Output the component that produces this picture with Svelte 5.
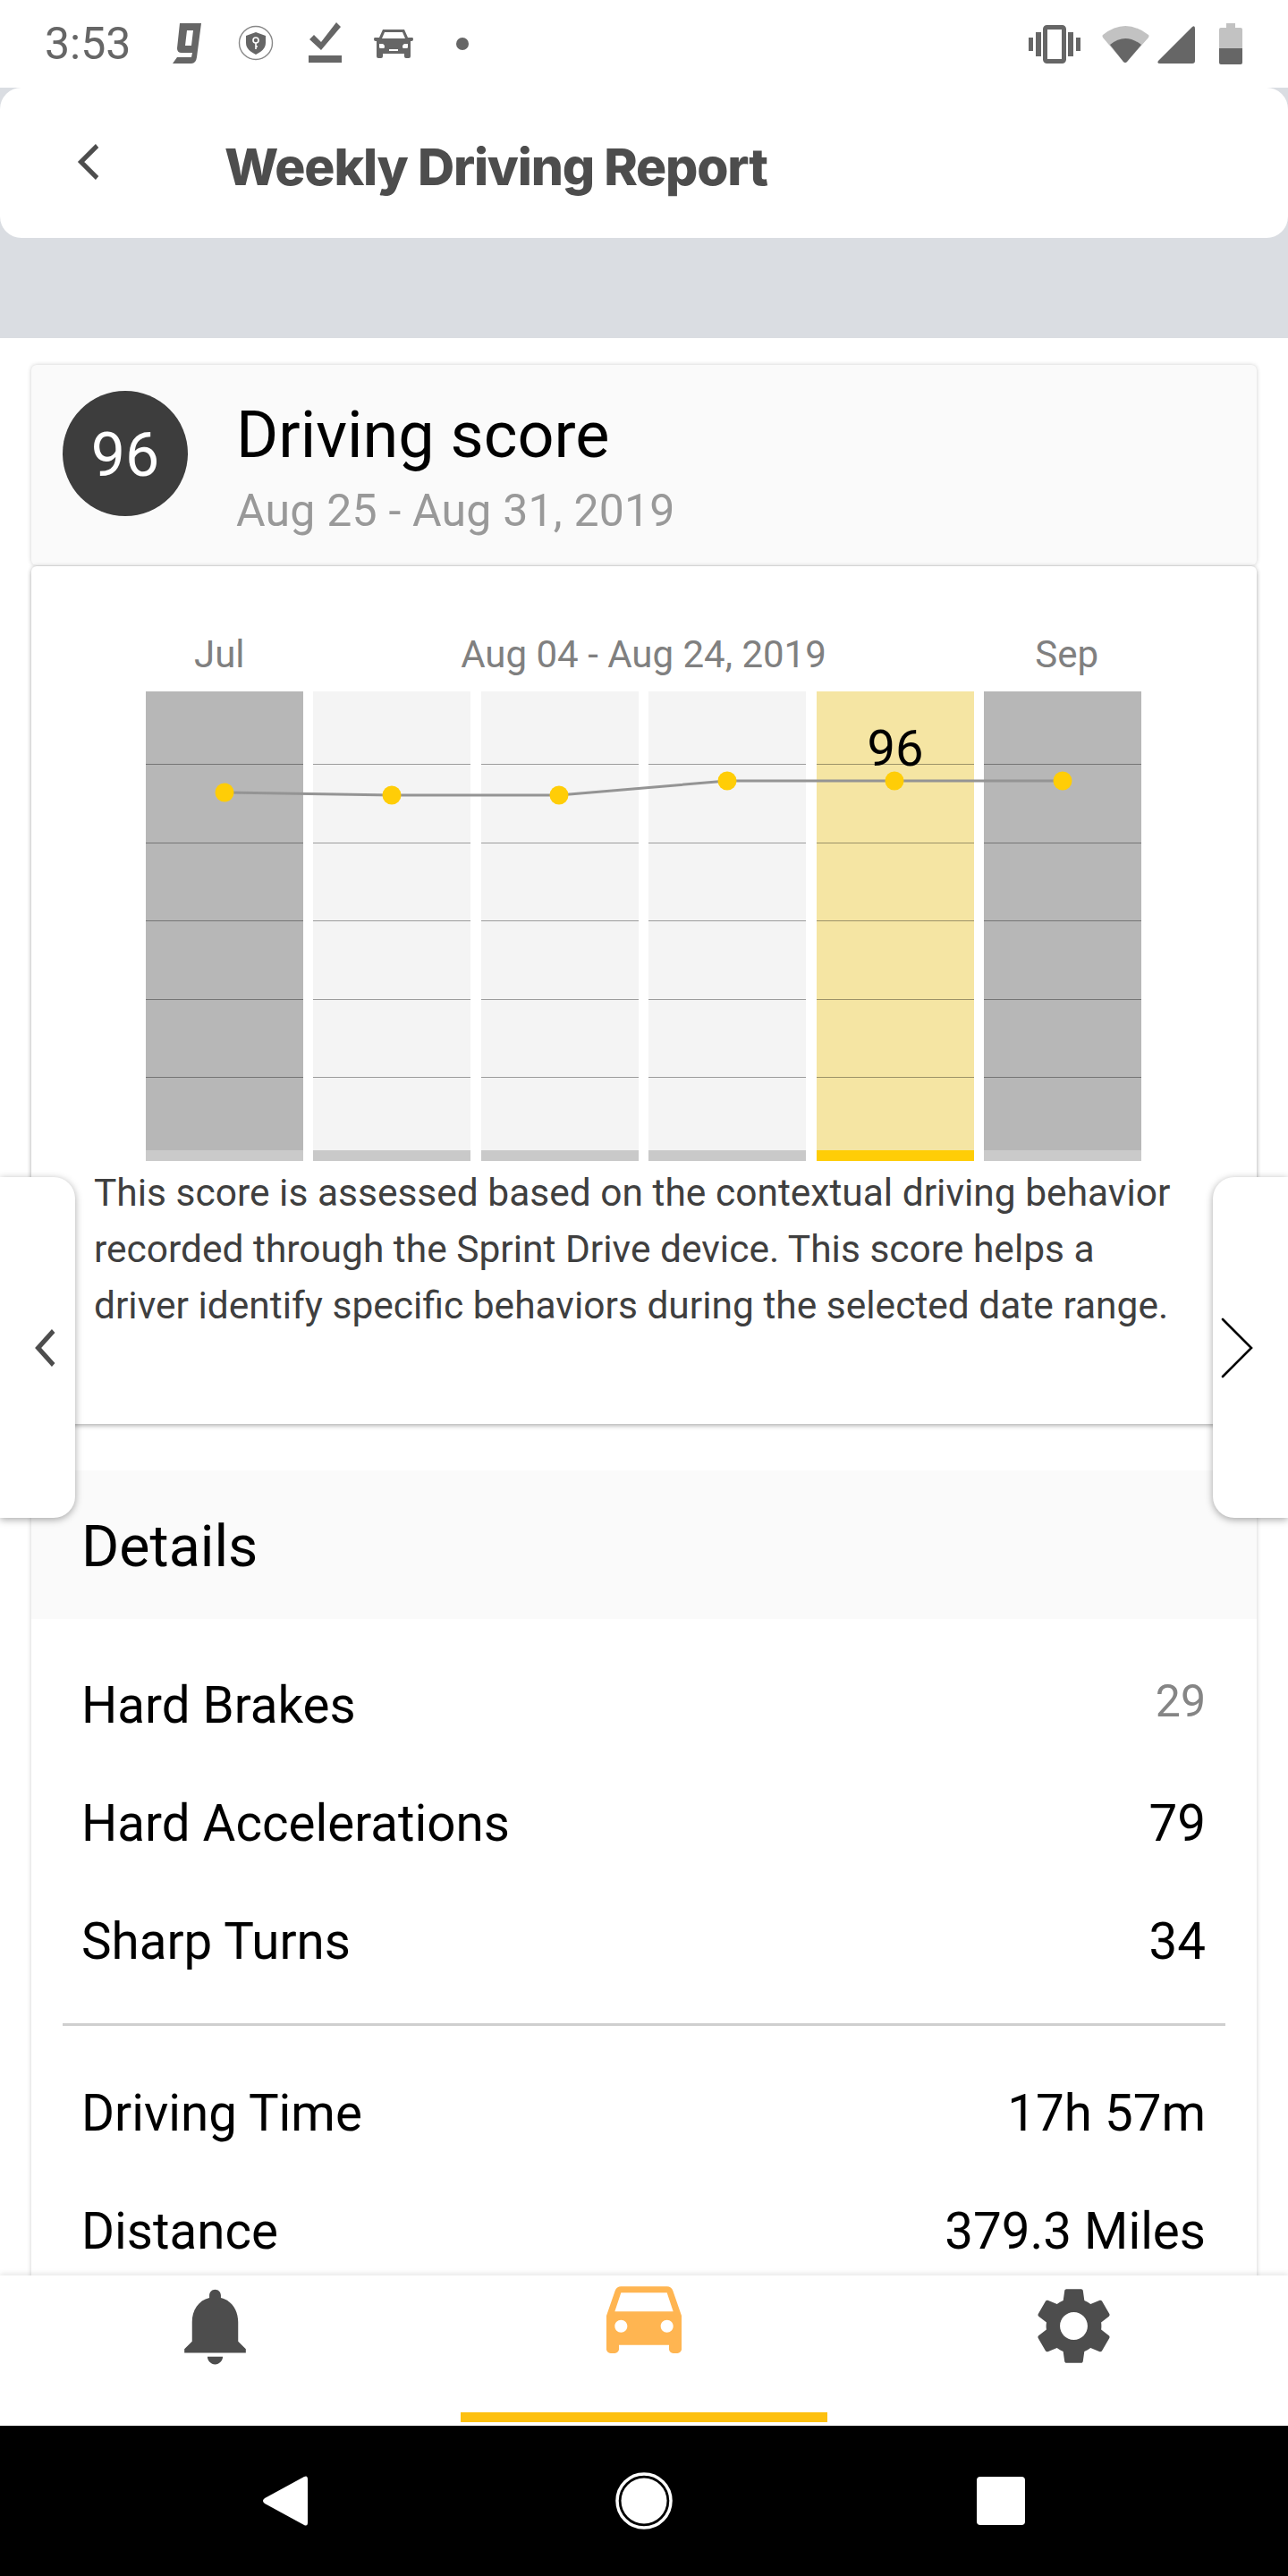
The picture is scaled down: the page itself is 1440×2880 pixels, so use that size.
<script>
  const bars = ["past", "week", "week", "week", "current", "past"];
  const gridlines = [0, 1, 2, 3, 4];
  const points = [
    [88, 113],
    [275, 116],
    [462, 116],
    [650, 100],
    [837, 100],
    [1025, 100],
  ];
  const line = points.map((p) => p.join(",")).join(" ");

  const events = [
    { label: "Hard Brakes", value: "29", muted: true },
    { label: "Hard Accelerations", value: "79" },
    { label: "Sharp Turns", value: "34" },
  ];
  const totals = [
    { label: "Driving Time", value: "17h 57m" },
    { label: "Distance", value: "379.3 Miles" },
  ];
</script>

<div class="phone">
  <div class="status">
    <span class="time">3:53</span>
    <svg class="st-g" viewBox="0 0 32 45" width="32" height="45">
      <path d="M8 0h24l-5 38q-1 7-6 7H0l5-7h16l1-5H10q-5 0-5-5zm8 8l-2 17h7l2-17z" fill="#666" fill-rule="evenodd" />
    </svg>
    <svg class="st-shield" viewBox="0 0 40 40" width="40" height="40">
      <circle cx="20" cy="20" r="18.5" fill="none" stroke="#888" stroke-width="1.4" />
      <path d="M20 8l11 4v8c0 6-5 10-11 13-6-3-11-7-11-13v-8z" fill="#666" />
      <circle cx="20" cy="17" r="3" fill="none" stroke="#fff" stroke-width="1.6" />
      <path d="M20 20v7M20 24h2" stroke="#fff" stroke-width="1.6" fill="none" />
    </svg>
    <svg class="st-check" viewBox="0 0 37 45" width="37" height="45">
      <path d="M1 19l5-5 8 8L31 0l5 5-22 26z" fill="#666" />
      <rect x="0" y="37" width="37" height="8" fill="#666" />
    </svg>
    <svg class="st-car" viewBox="0 0 44 32" width="44" height="32">
      <path d="M10 0h24l4 9h5q1 0 1 2t-2 2h-1v17q0 2-2 2h-3q-2 0-2-2v-3H10v3q0 2-2 2H5q-2 0-2-2V13H2q-2 0-2-2t1-2h5zm2 3l-3 7h26l-3-7zM6 16v4q0 1 2 1h3q1 0 1-2t-2-3zm32 0h-4q-2 1-2 3t1 2h3q2 0 2-1zm-21 6v2h10v-2z" fill="#666" fill-rule="evenodd" />
    </svg>
    <span class="st-dot"></span>

    <div class="status-right">
      <svg viewBox="0 0 58 43" width="58" height="43">
        <path d="M0 14h5v15H0zM8 8h6v27H8zM44 8h6v27h-6zM53 14h5v15h-5z" fill="#666" />
        <rect x="18.5" y="2.5" width="21" height="38" rx="2" fill="none" stroke="#666" stroke-width="5" />
      </svg>
      <svg class="st-wifi" viewBox="0 0 53 43" width="53" height="43">
        <path d="M1 11Q26-9 52 11q1 1 0 3L28 41q-2 2-4 0L1 14q-1-2 0-3z" fill="#c2c2c2" />
        <path d="M9 22Q26 8 44 22L28 41q-2 2-4 0z" fill="#666" />
      </svg>
      <svg class="st-signal" viewBox="0 0 42 42" width="42" height="42">
        <path d="M39 1q3-2 3 2v36q0 3-3 3H3q-4 0-2-3z" fill="#666" />
      </svg>
      <svg class="st-battery" viewBox="0 0 26 46" width="26" height="46">
        <path d="M8 0h10v5h6q2 0 2 2v21H0V7q0-2 2-2h6z" fill="#c2c2c2" />
        <path d="M0 28h26v16q0 2-2 2H2q-2 0-2-2z" fill="#666" />
      </svg>
    </div>
  </div>

  <div class="top">
    <header>
      <svg class="back" viewBox="0 0 26 40" width="26" height="40">
        <path d="M24 2L4 20l20 18" fill="none" stroke="#4d4d4d" stroke-width="5.5" transform="matrix(.9 0 0 1 1 0)" />
      </svg>
      <h1>Weekly Driving Report</h1>
    </header>
  </div>

  <main>
    <section class="score-head">
      <div class="badge">96</div>
      <div class="score-text">
        <h2>Driving score</h2>
        <p class="range">Aug 25 - Aug 31, 2019</p>
      </div>
    </section>

    <section class="chart-card">
      <div class="labels">
        <span class="jul">Jul</span>
        <span>Aug 04 - Aug 24, 2019</span>
        <span class="sep">Sep</span>
      </div>
      <div class="chart">
        {#each bars as kind}
          <div class="bar {kind}">
            <div class="grid">
              {#each gridlines as g}
                <i></i>
              {/each}
            </div>
          </div>
        {/each}
        <svg class="plot" viewBox="0 0 1113 525" width="1113" height="525">
          <polyline points={line} fill="none" stroke="#949494" stroke-width="3" />
          {#each points as p}
            <circle cx={p[0]} cy={p[1]} r="10.5" fill="#ffcd07" />
          {/each}
        </svg>
        <span class="bar-value">96</span>
      </div>
      <p class="desc">
        This score is assessed based on the contextual driving behavior<br />
        recorded through the Sprint Drive device. This score helps a<br />
        driver identify specific behaviors during the selected date range.
      </p>
    </section>

    <section class="details">
      <h3>Details</h3>
      <div class="rows events">
        {#each events as row}
          <div class="row">
            <span>{row.label}</span>
            <span class:muted={row.muted}>{row.value}</span>
          </div>
        {/each}
      </div>
      <hr />
      <div class="rows">
        {#each totals as row}
          <div class="row">
            <span>{row.label}</span>
            <span>{row.value}</span>
          </div>
        {/each}
      </div>
    </section>
  </main>

  <button class="tab left" aria-label="Previous">
    <svg viewBox="0 0 26 42" width="26" height="42">
      <path d="M23 2L4 21l19 19" fill="none" stroke="#4d4d4d" stroke-width="5.5" transform="matrix(.9 0 0 1 1 0)" />
    </svg>
  </button>
  <button class="tab right" aria-label="Next">
    <svg viewBox="0 0 36 68" width="36" height="68">
      <path d="M2 2l32 32L2 66" fill="none" stroke="#000" stroke-width="2.6" stroke-linecap="round" />
    </svg>
  </button>

  <nav class="tabs">
    <div class="tab-item">
      <svg viewBox="0 0 24 24" width="103" height="103">
        <path fill="#4d4d4d" d="M12 22c1.1 0 2-.9 2-2h-4c0 1.1.89 2 2 2zm6-6v-5c0-3.07-1.64-5.64-4.5-6.32V4c0-.83-.67-1.5-1.5-1.5s-1.5.67-1.5 1.5v.68C7.63 5.36 6 7.92 6 11v5l-2 2v1h16v-1l-2-2z" />
      </svg>
    </div>
    <div class="tab-item active">
      <svg viewBox="0 0 24 24" width="112" height="112">
        <path fill="#ffb551" d="M18.92 6.01C18.72 5.42 18.16 5 17.5 5h-11c-.66 0-1.21.42-1.42 1.01L3 12v8c0 .55.45 1 1 1h1c.55 0 1-.45 1-1v-1h12v1c0 .55.45 1 1 1h1c.55 0 1-.45 1-1v-8l-2.08-5.99zM6.5 16c-.83 0-1.5-.67-1.5-1.5S5.67 13 6.5 13s1.5.67 1.5 1.5S7.33 16 6.5 16zm11 0c-.83 0-1.5-.67-1.5-1.5s.67-1.5 1.5-1.5 1.5.67 1.5 1.5-.67 1.5-1.5 1.5zM5 11l1.5-4.5h11L19 11H5z" />
      </svg>
    </div>
    <div class="tab-item">
      <svg viewBox="0 0 24 24" width="103" height="103">
        <path fill="#4d4d4d" d="M19.14 12.94c.04-.3.06-.61.06-.94 0-.32-.02-.64-.07-.94l2.03-1.58c.18-.14.23-.41.12-.61l-1.92-3.32c-.12-.22-.37-.29-.59-.22l-2.39.96c-.5-.38-1.03-.7-1.62-.94l-.36-2.54c-.04-.24-.24-.41-.48-.41h-3.84c-.24 0-.43.17-.47.41l-.36 2.54c-.59.24-1.13.57-1.62.94l-2.39-.96c-.22-.08-.47 0-.59.22L2.74 8.87c-.12.21-.08.47.12.61l2.03 1.58c-.05.3-.09.63-.09.94s.02.64.07.94l-2.03 1.58c-.18.14-.23.41-.12.61l1.92 3.32c.12.22.37.29.59.22l2.39-.96c.5.38 1.03.7 1.62.94l.36 2.54c.05.24.24.41.48.41h3.84c.24 0 .44-.17.47-.41l.36-2.54c.59-.24 1.13-.56 1.62-.94l2.39.96c.22.08.47 0 .59-.22l1.92-3.32c.12-.22.07-.47-.12-.61l-2.01-1.58zM12 15.6c-1.98 0-3.6-1.62-3.6-3.6s1.62-3.6 3.6-3.6 3.6 1.62 3.6 3.6-1.62 3.6-3.6 3.6z" />
      </svg>
    </div>
  </nav>

  <div class="softkeys">
    <svg viewBox="0 0 50 56" width="50" height="56">
      <path d="M46 1q4-2 4 3v48q0 5-4 3L2 31q-4-3 0-6z" fill="#fff" />
    </svg>
    <svg viewBox="0 0 64 64" width="64" height="64">
      <circle cx="32" cy="32" r="30" fill="none" stroke="#fff" stroke-width="3.5" />
      <circle cx="32" cy="32" r="25.5" fill="#fff" />
    </svg>
    <svg class="square" viewBox="0 0 54 54" width="54" height="54">
      <rect width="54" height="54" rx="4" fill="#fff" />
    </svg>
  </div>
</div>

<style>
  :global(body) {
    background: #fff;
  }

  .phone {
    position: relative;
    width: 1440px;
    height: 2880px;
    display: flex;
    flex-direction: column;
    overflow: hidden;
    font-family: Roboto, "Liberation Sans", sans-serif;
    color: #000;
  }

  .status {
    height: 98px;
    flex: none;
    display: flex;
    align-items: center;
    padding: 0 51px 0 50px;
    box-sizing: border-box;
    color: #666;
  }

  .time {
    font-size: 50px;
    width: 143px;
    line-height: 1;
  }

  .st-g {
    margin-top: -2px;
  }

  .st-shield {
    margin-left: 41px;
    margin-top: -2px;
  }

  .st-check {
    margin-left: 39px;
    margin-top: -3px;
  }

  .st-car {
    margin-left: 36px;
  }

  .st-dot {
    width: 14px;
    height: 14px;
    border-radius: 50%;
    background: #666;
    margin-left: 48px;
  }

  .status-right {
    margin-left: auto;
    display: flex;
    align-items: center;
  }

  .st-wifi {
    margin-left: 24px;
  }

  .st-signal {
    margin-left: 9px;
    margin-top: 2px;
  }

  .st-battery {
    margin-left: 27px;
  }

  .top {
    height: 280px;
    flex: none;
    background: #dadde2;
  }

  header {
    height: 168px;
    background: #fff;
    border-radius: 24px;
    display: flex;
    align-items: center;
    padding-left: 86px;
  }

  .back {
    margin-top: -2px;
  }

  h1 {
    margin: 8px 0 0 139px;
    font-family: Inter, sans-serif;
    font-weight: 800;
    font-size: 57px;
    letter-spacing: -1.2px;
    color: #4d4d4d;
  }

  main {
    flex: 1;
    min-height: 0;
    overflow: hidden;
    padding: 30px 35px 0;
  }

  section {
    box-shadow: 0 0 5px rgba(0, 0, 0, 0.2);
  }

  .score-head {
    height: 224px;
    box-sizing: border-box;
    background: #fafafa;
    border-radius: 6px;
    display: flex;
    padding: 29px 0 0 35px;
    gap: 54px;
    margin-bottom: 1px;
  }

  .badge {
    width: 140px;
    height: 140px;
    border-radius: 50%;
    background: #3d3d3d;
    color: #fff;
    font-size: 68px;
    display: flex;
    align-items: center;
    justify-content: center;
    box-sizing: border-box;
    padding-top: 4px;
  }

  .score-text {
    margin-top: 8px;
  }

  h2 {
    margin: 0;
    font-size: 72px;
    font-weight: 400;
    line-height: 84px;
  }

  .range {
    margin: 12px 0 0;
    font-size: 50px;
    line-height: 60px;
    letter-spacing: 0.2px;
    color: #999;
  }

  .chart-card {
    position: relative;
    z-index: 1;
    height: 959px;
    box-sizing: border-box;
    background: #fff;
    border-radius: 6px;
    padding: 70px 0 0;
    box-shadow:
      0 0 5px rgba(0, 0, 0, 0.2),
      0 3px 5px rgba(0, 0, 0, 0.18);
  }

  .labels {
    margin-left: 128px;
    width: 1113px;
    display: grid;
    grid-template-columns: 1fr auto 1fr;
    font-size: 42px;
    line-height: 58px;
    color: #808080;
  }

  .jul {
    padding-left: 54px;
  }

  .sep {
    justify-self: end;
    padding-right: 48px;
  }

  .chart {
    position: relative;
    margin: 12px 0 0 128px;
    width: 1113px;
    height: 525px;
    display: flex;
    justify-content: space-between;
  }

  .bar {
    width: 176px;
    height: 100%;
    box-sizing: border-box;
    border-bottom: 12px solid #c9c9c9;
    background: #f4f4f4;
  }

  .bar.past {
    background: #b7b7b7;
    border-bottom-color: #cacaca;
  }

  .bar.current {
    background: #f5e5a3;
    border-bottom-color: #ffcd07;
  }

  .grid {
    padding-top: 81px;
    display: flex;
    flex-direction: column;
    gap: 86.6px;
  }

  .grid i {
    display: block;
    height: 1px;
    background: rgba(0, 0, 0, 0.36);
  }

  .plot {
    position: absolute;
    left: 0;
    top: 0;
  }

  .bar-value {
    position: absolute;
    left: 750px;
    width: 176px;
    top: 29px;
    text-align: center;
    font-size: 56px;
    line-height: 70px;
  }

  .desc {
    margin: 0 0 0 70px;
    padding-top: 4px;
    font-size: 42.5px;
    line-height: 63px;
    color: #3f3f3f;
    white-space: nowrap;
  }

  .details {
    background: #fff;
    padding: 52px 0 60px;
  }

  h3 {
    margin: 0;
    height: 166px;
    background: #fafafa;
    display: flex;
    align-items: center;
    padding: 4px 0 0 56px;
    box-sizing: border-box;
    font-size: 64.5px;
    font-weight: 400;
  }

  .rows {
    padding: 32px 57px 0 56px;
    display: flex;
    flex-direction: column;
  }

  .rows.events {
    padding-top: 31px;
    padding-bottom: 25px;
  }

  .row {
    height: 132px;
    display: flex;
    align-items: center;
    justify-content: space-between;
    font-size: 56.5px;
  }

  .muted {
    font-size: 50px;
    color: #858585;
    margin-top: -10px;
  }

  hr {
    margin: 0 35px;
    border: 0;
    height: 3px;
    background: #cfcfcf;
  }

  .tab {
    position: absolute;
    top: 1316px;
    width: 84px;
    height: 381px;
    padding: 0;
    border: 0;
    background: #fff;
    box-shadow: 0 2px 8px rgba(0, 0, 0, 0.35);
    display: flex;
    align-items: center;
    z-index: 2;
  }

  .tab.left {
    left: 0;
    border-radius: 0 24px 24px 0;
    padding-left: 38px;
  }

  .tab.right {
    right: 0;
    border-radius: 24px 0 0 24px;
    padding-left: 9px;
  }

  .tabs {
    flex: none;
    height: 168px;
    background: #fff;
    display: grid;
    grid-template-columns: repeat(3, 1fr);
    position: relative;
    box-shadow: 0 -2px 6px rgba(0, 0, 0, 0.1);
  }

  .tab-item {
    position: relative;
    display: flex;
    justify-content: center;
    padding-top: 5px;
  }

  .tab-item.active {
    padding-top: 0;
  }

  .tab-item.active svg {
    margin-top: -11px;
  }

  .tab-item.active::after {
    content: "";
    position: absolute;
    left: 35px;
    right: 35px;
    top: 153px;
    height: 11px;
    background: #fdc010;
  }

  .softkeys {
    flex: none;
    height: 168px;
    background: #000;
    display: grid;
    grid-template-columns: repeat(3, 1fr);
    padding: 0 118px;
    place-items: center;
  }

  .square {
    margin-right: 4px;
  }
</style>
